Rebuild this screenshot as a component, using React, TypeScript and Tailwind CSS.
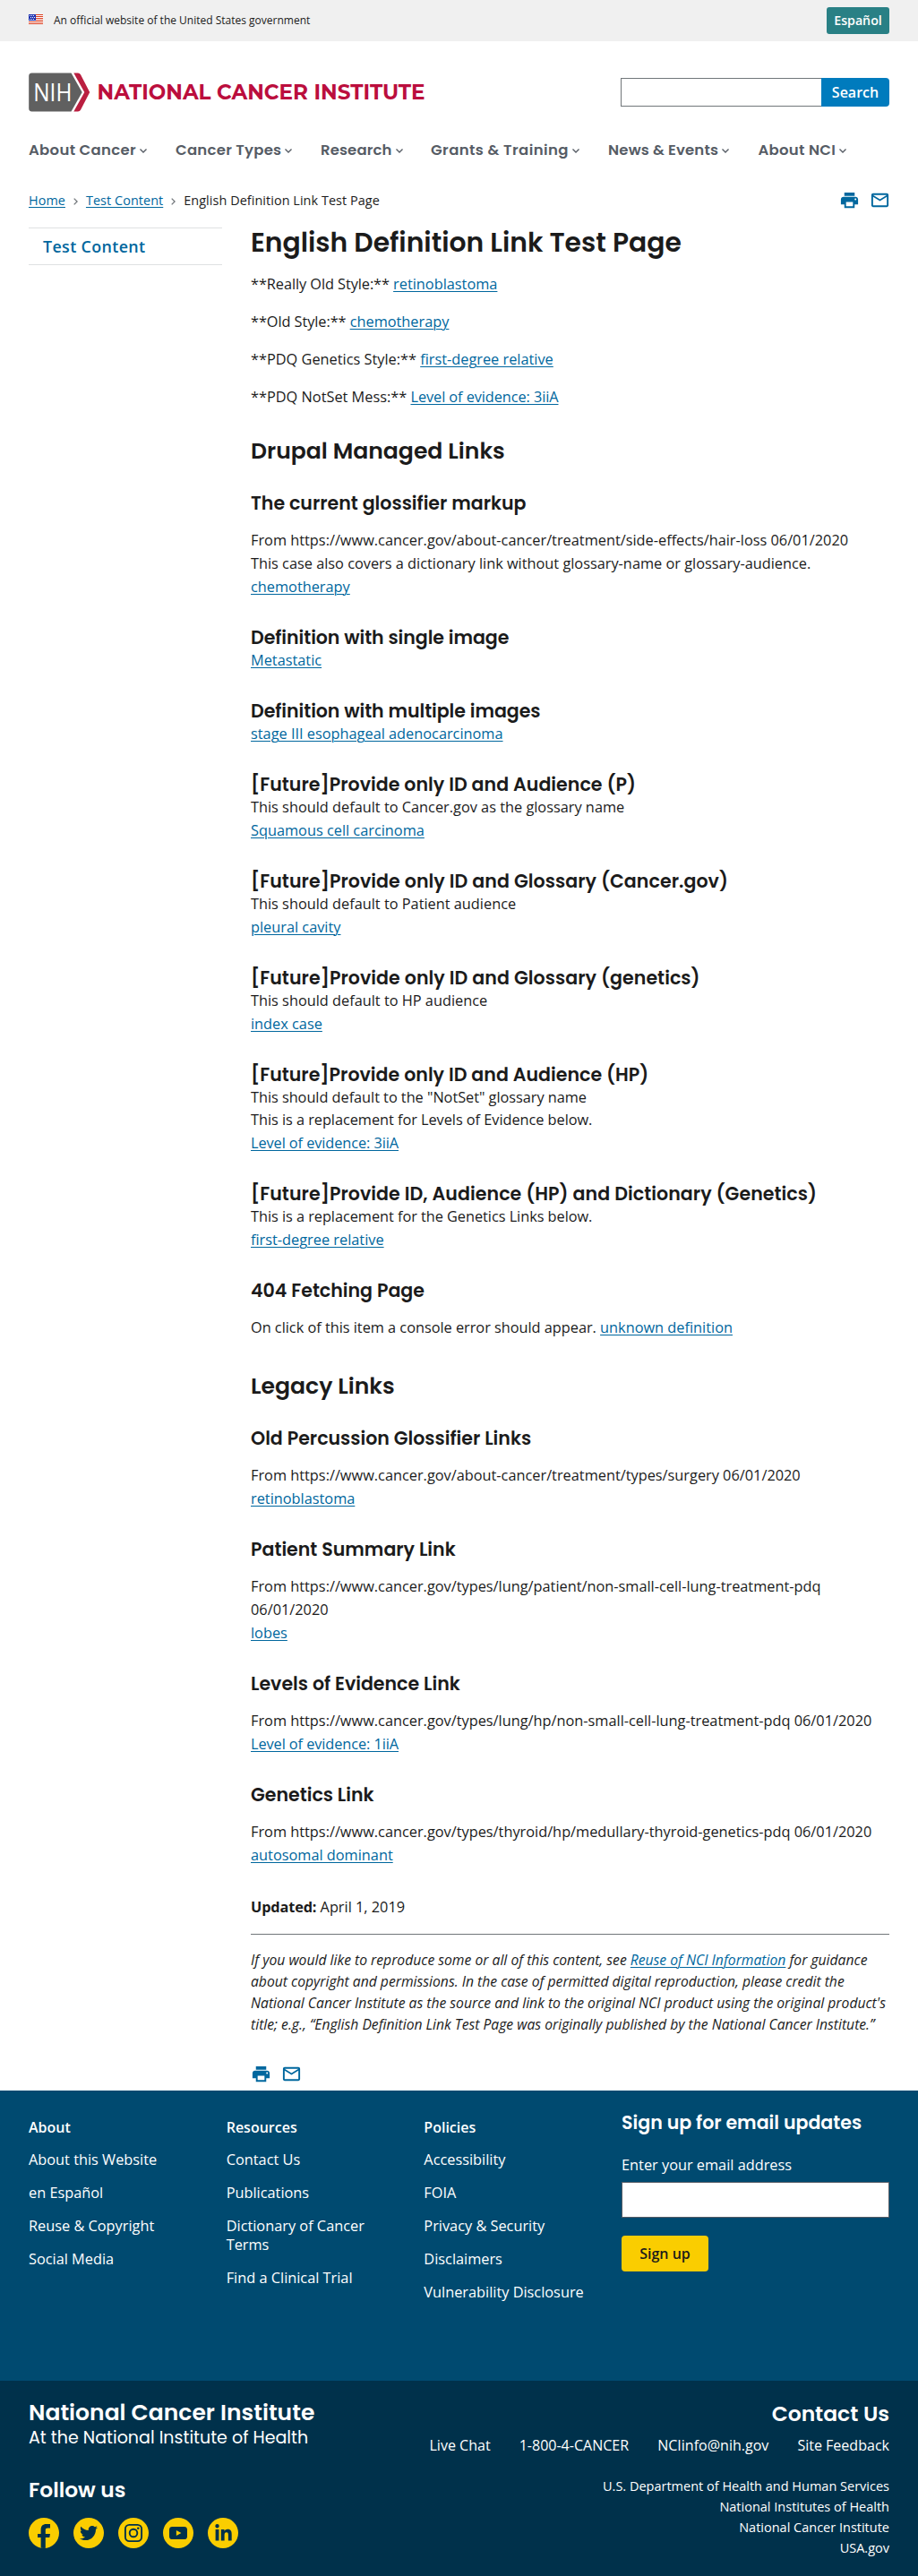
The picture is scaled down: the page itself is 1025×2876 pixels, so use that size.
import type { ReactNode } from "react";
import { FaLinkedinIn, FaTwitter } from "react-icons/fa";
import { MdMailOutline, MdPrint } from "react-icons/md";

function A({ children }: { children: ReactNode }) {
  return (
    <a href="#" className="text-[#00679e] underline decoration-1 underline-offset-[2px]">
      {children}
    </a>
  );
}

function H2({ children, first }: { children: ReactNode; first?: boolean }) {
  return (
    <h2
      className={
        (first ? "mt-[32.8px]" : "mt-[37.4px]") +
        " font-['Poppins',sans-serif] text-[25.1px] leading-[30px] font-semibold whitespace-nowrap"
      }
    >
      {children}
    </h2>
  );
}

function H3({ children, className = "" }: { children: ReactNode; className?: string }) {
  return (
    <h3
      className={
        "mt-[31.4px] pb-[0.6px] font-['Poppins',sans-serif] text-[20.56px] leading-[24.6px] font-semibold whitespace-nowrap " +
        className
      }
    >
      {children}
    </h3>
  );
}

function Lines({ children }: { children: ReactNode }) {
  return <div className="leading-[25.6px]">{children}</div>;
}

function Para({ children }: { children: ReactNode }) {
  return <p className="mt-[15.9px] leading-[25.77px]">{children}</p>;
}

function Logo() {
  return (
    <svg width="456" height="44" viewBox="0 0 456 44" aria-label="NIH National Cancer Institute">
      <path d="M3.5 0.5H47.5L59.7 22L47.5 43.4H3.5Q0.2 43.4 0.2 40V4Q0.2 0.5 3.5 0.5Z" fill="#606060" />
      <path d="M50.3 0.5H55Q57 0.5 58 2.2L68.2 22L58 41.7Q57 43.4 55 43.4H50.3L62.3 22Z" fill="#ba1f40" />
      <text
        x="5.3"
        y="31.7"
        textLength="43"
        lengthAdjust="spacingAndGlyphs"
        fill="#fff"
        className="font-['Open_Sans',sans-serif] text-[26.4px] font-medium"
      >
        NIH
      </text>
      <text
        x="76.5"
        y="29.8"
        textLength="366"
        lengthAdjust="spacingAndGlyphs"
        fill="#bb0e3d"
        className="font-['Montserrat','Poppins',sans-serif] text-[23.4px] font-bold"
      >
        NATIONAL CANCER INSTITUTE
      </text>
    </svg>
  );
}

function Flag() {
  return (
    <svg width="16" height="11" viewBox="0 0 16 11">
      <path d="M0 0h16v11H0z" fill="#fff" />
      <path d="M0 0h16v1H0zM0 2h16v1H0zM0 4h16v1H0zM0 6h16v1H0zM0 8h16v1H0zM0 10h16v1H0z" fill="#db3e1f" />
      <path d="M0 0h8v7H0z" fill="#1e33b1" />
      <path d="M1 1h1v1H1zM3 1h1v1H3zM5 1h1v1H5zM2 3h1v1H2zM4 3h1v1H4zM6 3h1v1H6zM1 5h1v1H1zM3 5h1v1H3zM5 5h1v1H5z" fill="#fff" />
    </svg>
  );
}

function NavItem({ label, className }: { label: string; className: string }) {
  return (
    <a href="#" className={"flex items-center whitespace-nowrap " + className}>
      {label}
      <svg width="8" height="5" viewBox="0 0 8 5" className="mt-px ml-1 shrink-0" fill="none" stroke="#565c65" strokeWidth="1.4">
        <path d="M0.5 0.6L4 4L7.5 0.6" />
      </svg>
    </a>
  );
}

function Crumb() {
  return (
    <svg width="5" height="8" viewBox="0 0 5 8" className="mx-[9px] mt-px" fill="none" stroke="#71767a" strokeWidth="1.3">
      <path d="M0.7 0.6L4.1 4L0.7 7.4" />
    </svg>
  );
}

function PageTools() {
  return (
    <div className="flex gap-[11px] text-[#00679e]">
      <MdPrint size={23} />
      <MdMailOutline size={23} />
    </div>
  );
}

function FooterColumn({ title, links }: { title: string; links: string[] }) {
  return (
    <div className="w-[220.7px] pt-[31px] pr-8 leading-[21px]">
      <h3 className="text-[16px] font-semibold">{title}</h3>
      <ul className="mt-[15px] flex flex-col gap-4">
        {links.map((l) => (
          <li key={l}>{l}</li>
        ))}
      </ul>
    </div>
  );
}

function Social({ children }: { children: ReactNode }) {
  return (
    <a href="#" className="flex size-[34px] items-center justify-center overflow-hidden rounded-full bg-[#facd00] text-[#00314b]">
      {children}
    </a>
  );
}

export default function App() {
  return (
    <div className="h-[2876px] w-[1025px] bg-white font-['Open_Sans','Noto_Sans',sans-serif] text-[16.32px] text-[#1b1b1b]">
      <div className="flex h-[46px] items-center justify-between bg-[#f0f0f0] px-8">
        <div className="flex items-center gap-3 text-[12px]">
          <span className="-mt-[3px]"><Flag /></span>
          <span className="-mt-px">An official website of the United States government</span>
        </div>
        <a href="#" className="flex h-[30px] w-[70px] items-center justify-center rounded-[3px] bg-[#298085] text-[14.2px] font-semibold text-white">
          Español
        </a>
      </div>

      <header className="px-8">
        <div className="flex h-[110px] items-start justify-between pt-[35px]">
          <Logo />
          <div className="mt-[6px] flex h-8">
            <input className="w-56 border border-r-0 border-[#71767a] bg-white" />
            <button className="w-[76px] rounded-r-[4px] bg-[#007bbd] text-[16px] font-semibold text-white">Search</button>
          </div>
        </div>
        <nav className="flex h-6 gap-8 font-['Poppins',sans-serif] text-[16.5px] leading-6 font-semibold text-[#565c65]">
          <NavItem label="About Cancer" className="w-[132px] tracking-[0.3px]" />
          <NavItem label="Cancer Types" className="w-[130px] tracking-[0.25px]" />
          <NavItem label="Research" className="w-[91px] tracking-[0.12px]" />
          <NavItem label="Grants & Training" className="w-[166px] tracking-[0.4px]" />
          <NavItem label="News & Events" className="w-[135.5px] tracking-[0.16px]" />
          <NavItem label="About NCI" className="tracking-[0.28px]" />
        </nav>
        <div className="mt-8 flex h-6 items-center justify-between">
          <div className="flex items-center text-[14.4px] leading-6 tracking-[0.07px]">
            <A>Home</A>
            <Crumb />
            <A>Test Content</A>
            <Crumb />
            <span>English Definition Link Test Page</span>
          </div>
          <div className="-mt-0.5 -mr-px"><PageTools /></div>
        </div>
      </header>

      <div className="mt-4 flex h-[2082px] px-8">
        <aside className="mt-[2px] mr-8 w-54 shrink-0">
          <a href="#" className="flex h-[42px] items-center border-y border-[#dfe1e2] pl-4 text-[17.9px] font-semibold tracking-[0.35px] text-[#00679e]">
            Test Content
          </a>
        </aside>
        <main className="w-[713px]">
          <h1 className="mt-[0.6px] font-['Poppins',sans-serif] text-[29.8px] leading-9 font-semibold">
            English Definition Link Test Page
          </h1>
          <div className="mt-[15.4px] flex flex-col gap-4 leading-[26px]">
            <p><span className="tracking-[-0.07px]">**Really Old Style:** </span><A>retinoblastoma</A></p>
            <p><span className="tracking-[-0.07px]">**Old Style:** </span><A>chemotherapy</A></p>
            <p>**PDQ Genetics Style:** <A>first-degree relative</A></p>
            <p>**PDQ NotSet Mess:** <span className="tracking-[-0.08px]"><A>Level of evidence: 3iiA</A></span></p>
          </div>

          <H2 first>Drupal Managed Links</H2>
          <H3>The current glossifier markup</H3>
          <Para>
            From https://www.cancer.gov/about-cancer/treatment/side-effects/hair-loss 06/01/2020<br />
            This case also covers a dictionary link without glossary-name or glossary-audience.<br />
            <A>chemotherapy</A>
          </Para>
          <H3 className="tracking-[-0.05px]">Definition with single image</H3>
          <Lines><A>Metastatic</A></Lines>
          <H3 className="tracking-[-0.05px]">Definition with multiple images</H3>
          <Lines><A>stage III esophageal adenocarcinoma</A></Lines>
          <H3 className="tracking-[0.03px]">[Future]Provide only ID and Audience (P)</H3>
          <Lines>
            This should default to Cancer.gov as the glossary name<br />
            <A>Squamous cell carcinoma</A>
          </Lines>
          <H3 className="tracking-[0.06px]">[Future]Provide only ID and Glossary (Cancer.gov)</H3>
          <Lines>
            This should default to Patient audience<br />
            <A>pleural cavity</A>
          </Lines>
          <H3 className="tracking-[0.06px]">[Future]Provide only ID and Glossary (genetics)</H3>
          <Lines>
            This should default to HP audience<br />
            <A>index case</A>
          </Lines>
          <H3 className="tracking-[0.02px]">[Future]Provide only ID and Audience (HP)</H3>
          <Lines>
            <span className="tracking-[-0.04px]">This should default to the "NotSet" glossary name</span><br />
            <span className="tracking-[-0.04px]">This is a replacement for Levels of Evidence below.</span><br />
            <span className="tracking-[-0.08px]"><A>Level of evidence: 3iiA</A></span>
          </Lines>
          <H3 className="tracking-[0.06px]">[Future]Provide ID, Audience (HP) and Dictionary (Genetics)</H3>
          <Lines>
            <span className="tracking-[-0.04px]">This is a replacement for the Genetics Links below.</span><br />
            <A>first-degree relative</A>
          </Lines>
          <H3>404 Fetching Page</H3>
          <Para>
            <span className="tracking-[-0.02px]">On click of this item a console error should appear. </span>
            <A>unknown definition</A>
          </Para>

          <H2>Legacy Links</H2>
          <H3>Old Percussion Glossifier Links</H3>
          <Para>
            From https://www.cancer.gov/about-cancer/treatment/types/surgery 06/01/2020<br />
            <A>retinoblastoma</A>
          </Para>
          <H3>Patient Summary Link</H3>
          <Para>
            From https://www.cancer.gov/types/lung/patient/non-small-cell-lung-treatment-pdq<br />
            06/01/2020<br />
            <A>lobes</A>
          </Para>
          <H3>Levels of Evidence Link</H3>
          <Para>
            From https://www.cancer.gov/types/lung/hp/non-small-cell-lung-treatment-pdq 06/01/2020<br />
            <span className="tracking-[-0.08px]"><A>Level of evidence: 1iiA</A></span>
          </Para>
          <H3>Genetics Link</H3>
          <Para>
            From https://www.cancer.gov/types/thyroid/hp/medullary-thyroid-genetics-pdq 06/01/2020<br />
            <A>autosomal dominant</A>
          </Para>

          <p className="mt-[31.4px] leading-[26px]"><b className="tracking-[-0.15px]">Updated:</b> April 1, 2019</p>
          <div className="mt-[17px] h-px bg-[#71767a]" />
          <div className="mt-[15.6px] text-[15.68px] leading-6 tracking-[0.005px] whitespace-nowrap italic">
            If you would like to reproduce some or all of this content, see <A>Reuse of NCI Information</A> for guidance<br />
            about copyright and permissions. In the case of permitted digital reproduction, please credit the<br />
            National Cancer Institute as the source and link to the original NCI product using the original product's<br />
            title; e.g., “English Definition Link Test Page was originally published by the National Cancer Institute.”
          </div>
          <div className="mt-8 -ml-[0.5px]"><PageTools /></div>
        </main>
      </div>

      <footer className="text-white">
        <div className="flex h-[324px] bg-[#004a70] px-8">
          <FooterColumn title="About" links={["About this Website", "en Español", "Reuse & Copyright", "Social Media"]} />
          <FooterColumn title="Resources" links={["Contact Us", "Publications", "Dictionary of Cancer Terms", "Find a Clinical Trial"]} />
          <FooterColumn title="Policies" links={["Accessibility", "FOIA", "Privacy & Security", "Disclaimers", "Vulnerability Disclosure"]} />
          <div className="flex w-[299px] flex-col items-start pt-6">
            <h3 className="font-['Poppins',sans-serif] text-[20.56px] leading-6 font-semibold">Sign up for email updates</h3>
            <label className="mt-[22px] leading-[26px]">Enter your email address</label>
            <input className="mt-[6px] h-10 w-full border border-[#565c65] bg-white" />
            <button className="mt-5 h-10 w-[97px] rounded-[4px] bg-[#facd00] text-[16px] font-semibold text-[#1b1b1b]">Sign up</button>
          </div>
        </div>
        <div className="flex h-[218px] justify-between bg-[#00314b] px-8">
          <div className="pt-[21px] font-['Poppins',sans-serif]">
            <h2 className="text-[25px] leading-[30px] font-semibold tracking-[0.03px]">National Cancer Institute</h2>
            <div className="-mt-px text-[19.04px] leading-[27px]">At the National Institute of Health</div>
            <h3 className="mt-[31px] text-[23.3px] leading-7 font-semibold">Follow us</h3>
            <div className="mt-[17px] flex gap-4">
              <Social>
                <svg width="34" height="34" viewBox="0 0 34 34" fill="currentColor">
                  <path d="M13.6 34V22.1H10V18H13.6V13.4C13.6 9.2 15.8 7 19.6 7H24V11.4H21.2C19.4 11.4 18.8 12.2 18.8 13.8V18H24L23.3 22.1H18.8V34Z" />
                </svg>
              </Social>
              <Social><FaTwitter size={20} /></Social>
              <Social>
                <svg width="34" height="34" viewBox="0 0 34 34" fill="none" stroke="currentColor" strokeWidth="1.9">
                  <rect x="7.9" y="7.9" width="18.2" height="18.2" rx="4.6" />
                  <circle cx="17" cy="17" r="4.3" />
                  <circle cx="22.3" cy="11.7" r="1.3" fill="currentColor" stroke="none" />
                </svg>
              </Social>
              <Social>
                <svg width="34" height="34" viewBox="0 0 34 34" fill="currentColor">
                  <rect x="7" y="9.9" width="20" height="14.2" rx="3.4" />
                  <path d="M14.9 13.9L20.4 17L14.9 20.1Z" fill="#facd00" />
                </svg>
              </Social>
              <Social><FaLinkedinIn size={21} /></Social>
            </div>
          </div>
          <div className="flex flex-col items-end pt-[22.5px]">
            <h2 className="font-['Poppins',sans-serif] text-[23.45px] leading-7 font-semibold">Contact Us</h2>
            <div className="mt-2 flex gap-8 text-[16.05px] leading-[26px] whitespace-nowrap">
              <a href="#">Live Chat</a>
              <a href="#">1-800-4-CANCER</a>
              <a href="#">NCIinfo@nih.gov</a>
              <a href="#">Site Feedback</a>
            </div>
            <ul className="mt-[21px] text-right text-[14.5px] leading-[23px]">
              <li>U.S. Department of Health and Human Services</li>
              <li>National Institutes of Health</li>
              <li>National Cancer Institute</li>
              <li>USA.gov</li>
            </ul>
          </div>
        </div>
      </footer>
    </div>
  );
}
